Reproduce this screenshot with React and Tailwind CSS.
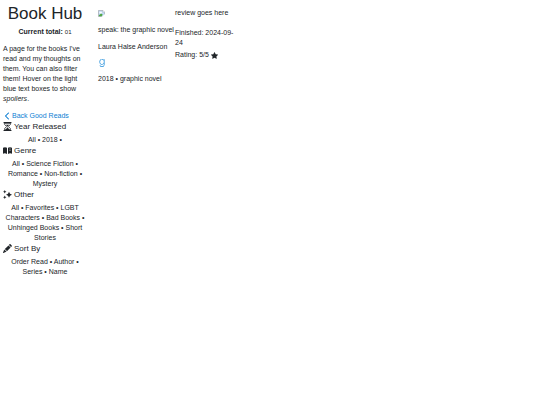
import React from 'react';
import { BsChevronLeft, BsPencilFill, BsStarFill } from 'react-icons/bs';
import { FaGoodreadsG } from 'react-icons/fa';

// Icons
const Hourglass = () => (
  <svg viewBox="0 0 16 16" className="size-[9px]" fill="currentColor" aria-hidden="true">
    <path d="M1 0h14v2H1zM1 14h14v2H1z" />
    <path d="M3 2h10v2.5L9.500 8l3.500 3.500V14H3v-2.500L6.500 8 3 4.500z" fill="none" stroke="currentColor" strokeWidth="1.5" />
    <path d="M5 5h6L8 8zM8 9.500L12 14H4z" />
  </svg>
);

const Book = () => (
  <svg viewBox="0 0 18 14" className="h-[7px] w-[9px]" fill="currentColor" aria-hidden="true">
    <path d="M0 1.500Q4-1 8 1.500V14Q4 11.500 0 13.500z" />
    <path d="M10 1.500Q14-1 18 1.500V13.500Q14 11.500 10 14z" />
    <path d="M12 4q2-.8 4 0M12 7q2-.8 4 0" fill="none" stroke="#fff" strokeWidth="0.7" />
  </svg>
);

const Sparkles = () => (
  <svg viewBox="0 0 18 18" className="size-[9px]" fill="currentColor" aria-hidden="true">
    <path d="M12 3.500l2 4 4 2-4 2-2 4-2-4-4-2 4-2z" />
    <path d="M3.500 0l1.200 2.300L7 3.500 4.700 4.700 3.500 7 2.300 4.700 0 3.500l2.300-1.200z" />
    <path d="M3.500 11l1.200 2.300L7 14.500l-2.300 1.200L3.500 18l-1.200-2.300L0 14.500l2.300-1.200z" />
  </svg>
);

const Pencil = () => <BsPencilFill className="size-[9px]" aria-hidden="true" />;

const MissingCover = () => (
  <svg viewBox="0 0 16 16" className="block size-[7px]" role="img" aria-label="cover">
    <path d="M1 1h10l4 4v10H1z" fill="#c5dcf8" stroke="#9aa0a6" strokeWidth="1.5" />
    <path d="M11 1v4h4" fill="#fff" stroke="#9aa0a6" />
    <ellipse cx="6" cy="6" rx="3" ry="1.8" fill="#fff" />
    <path d="M2 14v-2l5-4 4 3-3 3z" fill="#4fa743" />
    <path d="M8 16l8-7v7z" fill="#fff" />
  </svg>
);

const filters = [
  { title: 'Year Released', icon: Hourglass, options: ['All', '2018'], trailing: true },
  {
    title: 'Genre',
    icon: Book,
    options: ['All', 'Science Fiction', 'Romance', 'Non-fiction', 'Mystery'],
  },
  {
    title: 'Other',
    icon: Sparkles,
    options: ['All', 'Favorites', 'LGBT Characters', 'Bad Books', 'Unhinged Books', 'Short Stories'],
  },
  { title: 'Sort By', icon: Pencil, options: ['Order Read', 'Author', 'Series', 'Name'] },
];

const books = [
  {
    title: 'speak: the graphic novel',
    author: 'Laura Halse Anderson',
    year: 2018,
    genre: 'graphic novel',
    review: 'review goes here',
    finished: '2024-09-24',
    rating: 5,
  },
];

const FilterGroup = ({ title, icon: Icon, options, trailing }) => (
  <section>
    <h2 className="flex items-center gap-[2px] text-[8px] leading-[11px] mb-[3px]">
      <Icon />
      {title}
    </h2>
    <p className="text-center">
      {options.map((option, i) => (
        <React.Fragment key={option}>
          <a href="#">{option}</a>
          {(trailing || i < options.length - 1) && ' • '}
        </React.Fragment>
      ))}
    </p>
  </section>
);

const Sidebar = () => (
  <aside className="w-[84px] shrink-0">
    <h1 className="text-center text-[17px] leading-5 mt-1 mb-[3px]">Book Hub</h1>
    <p className="text-center mb-[7px]">
      <b>Current total:</b> <span className="text-[6px]">01</span>
    </p>
    <p className="mb-[7px]">
      A page for the books I've read and my thoughts on them. You can also filter them! Hover on
      the light blue text boxes to show <i>spoilers</i>.
    </p>
    <a href="#" className="flex items-center gap-px text-[#0d7ed3]">
      <BsChevronLeft className="size-2" strokeWidth="1" />
      Back Good Reads
    </a>
    {filters.map(group => (
      <FilterGroup key={group.title} {...group} />
    ))}
  </aside>
);

const BookEntry = ({ book }) => (
  <article className="flex">
    <div className="w-[77px] pt-[2px]">
      <MissingCover />
      <p className="mt-2">{book.title}</p>
      <p className="mt-[7px]">{book.author}</p>
      <a href="#" aria-label="Goodreads" className="block my-[7px] text-[#1688d8]">
        <FaGoodreadsG className="size-[8px]" />
      </a>
      <p>{book.year} • {book.genre}</p>
    </div>
    <div className="w-[62px]">
      <p className="mb-[10px]">{book.review}</p>
      <p>Finished: {book.finished}</p>
      <p className="flex items-center gap-[2px] mt-[2px]">
        Rating: {book.rating}/5 <BsStarFill className="size-[7px]" />
      </p>
    </div>
  </article>
);

export default function App() {
  return (
    <div className="flex min-h-screen gap-[11px] bg-white pl-[3px] font-['Liberation_Sans',Arial,sans-serif] text-[7px] leading-[10px] text-[#212529]">
      <Sidebar />
      <main className="flex-1 pt-2">
        {books.map(book => (
          <BookEntry key={book.title} book={book} />
        ))}
      </main>
    </div>
  );
}
